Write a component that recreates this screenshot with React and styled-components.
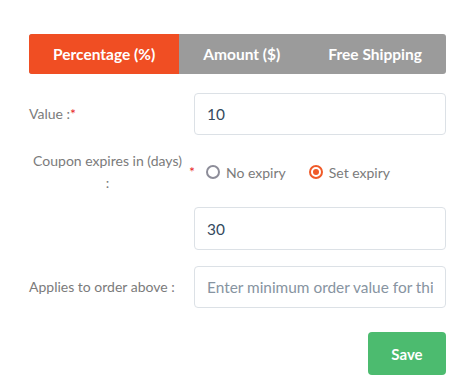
import React, { useState } from 'react';
import styled, { createGlobalStyle, css } from 'styled-components';

const GlobalStyle = createGlobalStyle`
    body {
        margin: 0;
        background: #fff;
        font-family: Lato, 'Open Sans', sans-serif;
    }
`;

const Page = styled.div`
    width: 417px;
    padding: 34px 0 0 29px;
`;

const Tabs = styled.div`
    display: flex;
    height: 40px;
    border-radius: 3px;
    overflow: hidden;
    background: #9b9b9b;
`;

const Tab = styled.button`
    flex: 0 0 auto;
    border: 0;
    margin: 0;
    padding: 0 24px;
    font-family: inherit;
    font-size: 15.5px;
    font-weight: 700;
    color: #fff;
    background: transparent;
    cursor: pointer;

    ${props =>
        props.$active &&
        css`
            background: #f04e23;
        `}

    &:last-child {
        flex: 1 1 auto;
    }
`;

const Row = styled.div`
    display: flex;
    align-items: center;
    margin-top: ${props => props.$gap}px;
`;

const Label = styled.div`
    flex: 0 0 165px;
    display: flex;
    align-items: center;
    font-size: 14px;
    line-height: 22px;
    color: #7b7b7b;
`;

const CenteredText = styled.span`
    width: 153px;
    margin-left: 2px;
    text-align: center;
`;

const Required = styled.span`
    color: #e8262b;
    margin-left: ${props => props.$offset || 0}px;
`;

const Input = styled.input`
    box-sizing: border-box;
    width: 252px;
    height: ${props => props.$h || 42}px;
    padding: 0 12px;
    border: 1px solid #dce1e6;
    border-radius: 4px;
    font-family: inherit;
    font-size: 15.4px;
    color: #34495e;
    outline: none;

    &::placeholder {
        color: #8794a1;
    }
`;

const RadioGroup = styled.div`
    display: flex;
    align-items: center;
    gap: 23px;
    padding-left: 11px;
`;

const RadioOption = styled.label`
    display: flex;
    align-items: center;
    gap: 6px;
    font-size: 14px;
    color: #7b7b7b;
    cursor: pointer;
`;

const RadioDot = styled.span`
    box-sizing: border-box;
    width: 14px;
    height: 14px;
    border-radius: 50%;
    border: 2px solid #8d8d99;
    display: flex;
    align-items: center;
    justify-content: center;

    ${props =>
        props.$checked &&
        css`
            border-color: #f05a28;
            &:after {
                content: '';
                width: 6px;
                height: 6px;
                border-radius: 50%;
                background: #f05a28;
            }
        `}
`;

const Actions = styled.div`
    display: flex;
    justify-content: flex-end;
    margin-top: 24px;
`;

const SaveButton = styled.button`
    width: 78px;
    height: 43px;
    border: 0;
    border-radius: 4px;
    background: #4cbb6f;
    color: #fff;
    font-family: inherit;
    font-size: 15px;
    font-weight: 700;
    cursor: pointer;
`;

const tabs = ['Percentage (%)', 'Amount ($)', 'Free Shipping'];

export default function App() {
    const [activeTab, setActiveTab] = useState(0);
    const [expiry, setExpiry] = useState('set');

    return (
        <>
            <GlobalStyle />
            <Page>
                <Tabs>
                    {tabs.map((tab, index) => (
                        <Tab key={tab} $active={activeTab === index} onClick={() => setActiveTab(index)}>
                            {tab}
                        </Tab>
                    ))}
                </Tabs>

                <Row $gap={19}>
                    <Label>
                        Value :<Required>*</Required>
                    </Label>
                    <Input defaultValue="10" />
                </Row>

                <Row $gap={15}>
                    <Label>
                        <CenteredText>Coupon expires in (days) :</CenteredText>
                        <Required $offset={5}>*</Required>
                    </Label>
                    <RadioGroup>
                        <RadioOption onClick={() => setExpiry('none')}>
                            <RadioDot $checked={expiry === 'none'} />
                            No expiry
                        </RadioOption>
                        <RadioOption onClick={() => setExpiry('set')}>
                            <RadioDot $checked={expiry === 'set'} />
                            Set expiry
                        </RadioOption>
                    </RadioGroup>
                </Row>

                <Row $gap={13}>
                    <Label />
                    <Input $h={43} defaultValue="30" />
                </Row>

                <Row $gap={16}>
                    <Label>Applies to order above :</Label>
                    <Input placeholder="Enter minimum order value for this coupon" />
                </Row>

                <Actions>
                    <SaveButton>Save</SaveButton>
                </Actions>
            </Page>
        </>
    );
}
